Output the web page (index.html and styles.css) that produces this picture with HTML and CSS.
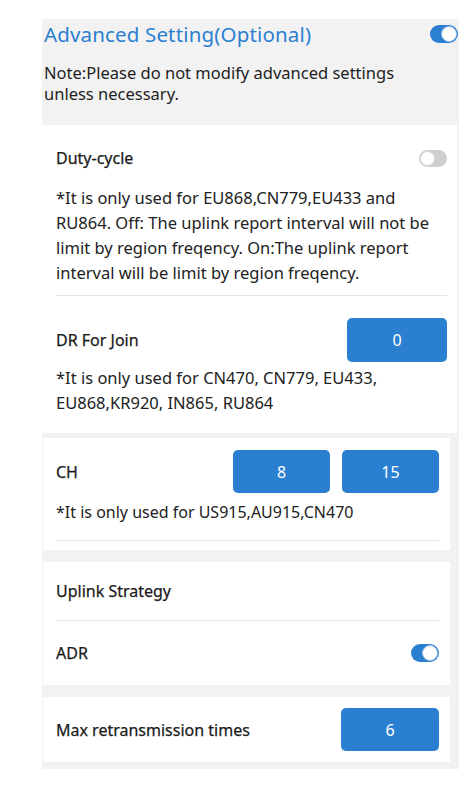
FILE: index.html
```html
<!DOCTYPE html>
<html>
<head>
  <meta name="viewport" content="width=device-width, initial-scale=1">
  <title>Advanced Setting</title>
  <link rel="stylesheet" href="styles.css">
</head>
<body>
  <div class="panel">
    <div class="panel-head">
      <span class="title">Advanced Setting(Optional)</span>
      <span class="toggle on"></span>
    </div>
    <p class="note">Note:Please do not modify advanced settings unless necessary.</p>

    <div class="card card-wide">
      <div class="row row-duty">
        <span class="label">Duty-cycle</span>
        <span class="toggle off"></span>
      </div>
      <p class="desc">*It is only used for EU868,CN779,EU433 and RU864. Off: The uplink report interval will not be limit by region freqency. On:The uplink report interval will be limit by region freqency.</p>
      <div class="divider"></div>
      <div class="row row-btn row-join">
        <span class="label">DR For Join</span>
        <button type="button" class="value">0</button>
      </div>
      <p class="desc desc-join">*It is only used for CN470, CN779, EU433, EU868,KR920, IN865, RU864</p>
    </div>

    <div class="card card-ch">
      <div class="row row-btn">
        <span class="label">CH</span>
        <div class="values">
          <button type="button" class="value">8</button>
          <button type="button" class="value">15</button>
        </div>
      </div>
      <p class="desc desc-ch">*It is only used for US915,AU915,CN470</p>
      <div class="divider"></div>
    </div>

    <div class="card card-uplink">
      <div class="row row-head">
        <span class="label">Uplink Strategy</span>
      </div>
      <div class="divider"></div>
      <div class="row row-adr">
        <span class="label">ADR</span>
        <span class="toggle on small"></span>
      </div>
    </div>

    <div class="card card-retry">
      <div class="row row-btn">
        <span class="label">Max retransmission times</span>
        <button type="button" class="value">6</button>
      </div>
    </div>
  </div>
</body>
</html>
```
FILE: styles.css
```css
html {font-family: "Noto Sans", "Liberation Sans", sans-serif; color: #222;}
body {margin: 0; background: #fff;}
p {margin: 0;}

.panel {width: 417px; margin: 19px 0 0 42px; padding-bottom: 7px; background: #f2f2f2;}
.panel-head {display: flex; align-items: center; justify-content: space-between; height: 30px; padding: 0 1px 0 2px;}
.title {font-size: 20.5px; color: #2b7fd1; letter-spacing: 0.15px;}
.note {font-size: 16.5px; line-height: 21px; padding: 13px 50px 0 2px; height: 76px; box-sizing: border-box; color: #1e1e1e;}

.card {background: #fff; margin: 0 9px 12px 1px; padding: 0 11px 0 13px;}
.card-wide {margin: 0 2px 5px 0; padding: 15px 10px 18px 14px;}
.card-ch {padding-top: 12px; padding-bottom: 9px;}
.card-retry {margin-bottom: 0; padding-top: 11px; padding-bottom: 11px;}

.row {display: flex; align-items: center; justify-content: space-between;}
.label {font-size: 16px; color: #1a1a1a; -webkit-text-stroke: 0.25px #1a1a1a;}
.row-duty {height: 36px;}
.row-btn {height: 43px;}
.row-join {height: 44px; margin-top: 22px;}
.row-head {height: 58px;}
.row-adr {height: 64px;}

.desc {font-size: 16.5px; line-height: 25px; color: #222; margin-top: 9px; padding-bottom: 10px;}
.desc-join {margin-top: 3px; padding-bottom: 0;}
.desc-ch {margin-top: 7px; padding-bottom: 15px; font-size: 16px;}

.divider {height: 1px; background: #e3e3e3;}

.values {display: flex; gap: 12px; align-self: stretch;}
.value {width: 98px; height: 100%; border: none; border-radius: 5px; background: #2b7fd0; color: #fff; font-family: inherit; font-size: 16px; padding: 0;}
.row-join .value {width: 100px;}
.card-ch .value {width: 97px;}

.toggle {position: relative; display: inline-block; width: 28px; height: 18px; border-radius: 9px; box-sizing: border-box;}
.toggle:before {content: ""; position: absolute; top: 1px; width: 16px; height: 16px; border-radius: 50%; background: #fff; box-sizing: border-box;}
.toggle.on {background: #2b7fd0;}
.toggle.on:before {right: 1px; border: 1px solid #9dc2e8;}
.toggle.off {background: #cfcfcf; height: 17px; width: 28px;}
.toggle.off:before {left: 1px; top: 1px; width: 15px; height: 15px; border: 1px solid #d8d8d8;}
```
